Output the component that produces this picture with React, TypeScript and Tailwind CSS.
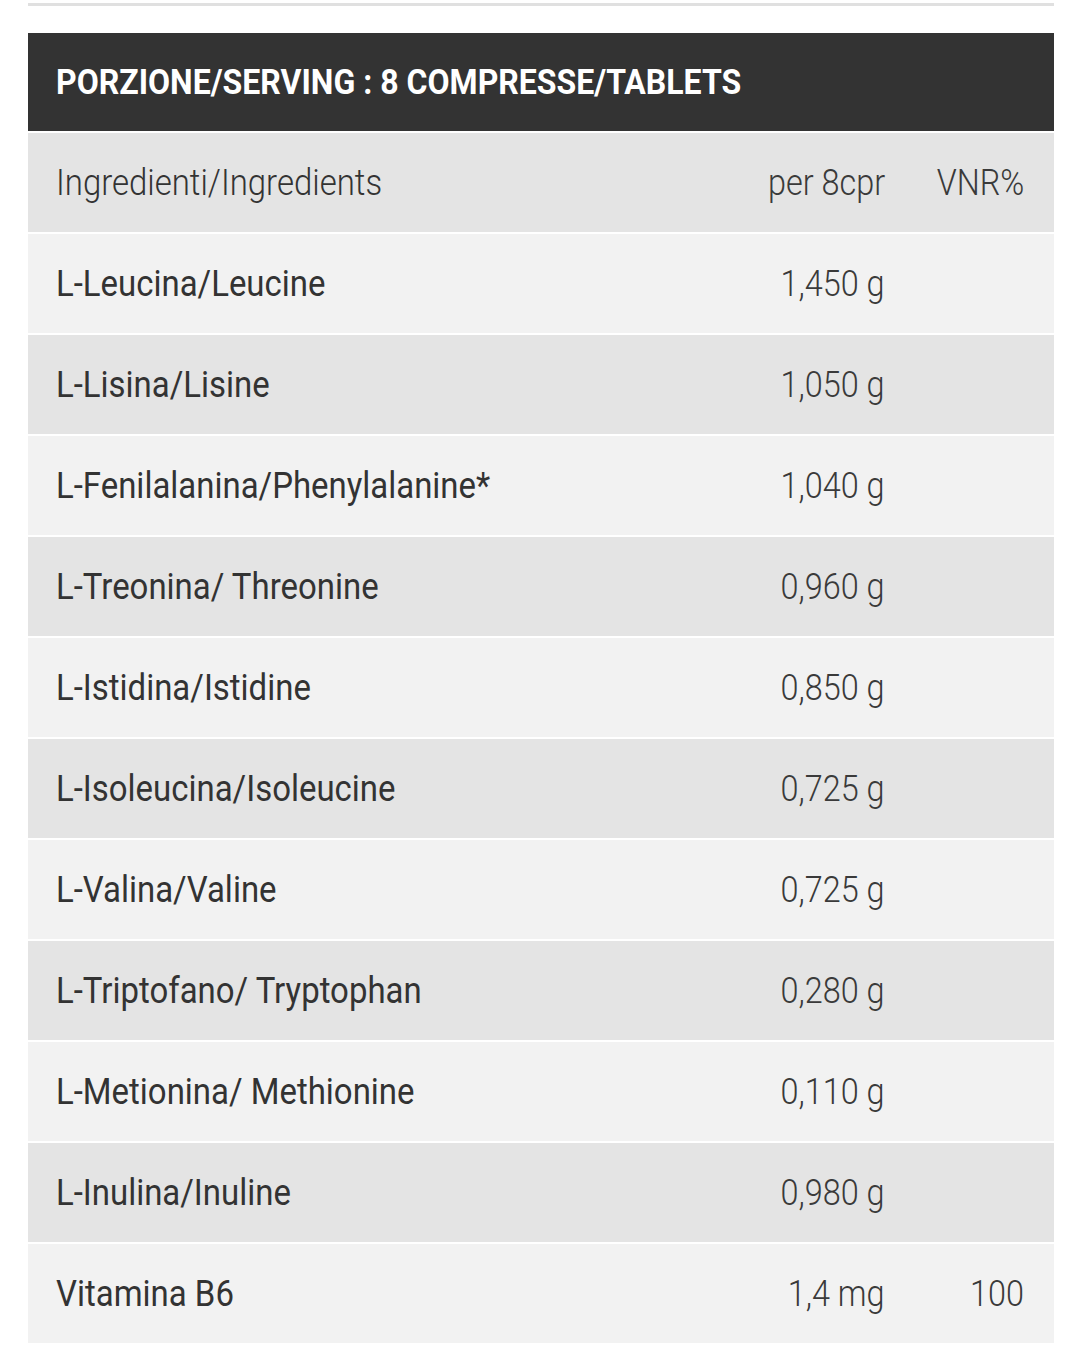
const rows: { name: string; amount: string; vnr?: string }[] = [
  { name: 'L-Leucina/Leucine', amount: '1,450 g' },
  { name: 'L-Lisina/Lisine', amount: '1,050 g' },
  { name: 'L-Fenilalanina/Phenylalanine*', amount: '1,040 g' },
  { name: 'L-Treonina/ Threonine', amount: '0,960 g' },
  { name: 'L-Istidina/Istidine', amount: '0,850 g' },
  { name: 'L-Isoleucina/Isoleucine', amount: '0,725 g' },
  { name: 'L-Valina/Valine', amount: '0,725 g' },
  { name: 'L-Triptofano/ Tryptophan', amount: '0,280 g' },
  { name: 'L-Metionina/ Methionine', amount: '0,110 g' },
  { name: 'L-Inulina/Inuline', amount: '0,980 g' },
  { name: 'Vitamina B6', amount: '1,4 mg', vnr: '100' },
];

// Roboto squeezed horizontally to stand in for Roboto Condensed
function Cond({ children, right }: { children: React.ReactNode; right?: boolean }) {
  return (
    <span
      className={
        'inline-block whitespace-nowrap ' +
        (right ? 'origin-right scale-x-[0.9]' : 'origin-left scale-x-[0.915]')
      }
    >
      {children}
    </span>
  );
}

function Row({
  name,
  amount,
  vnr,
  dark,
  light,
}: {
  name: string;
  amount: string;
  vnr?: string;
  dark: boolean;
  light?: boolean;
}) {
  return (
    <div
      className={
        'mt-[2px] flex h-[99px] items-center pl-[28px] pr-[30px] text-[36px] leading-none ' +
        (dark ? 'bg-[#e4e4e4]' : 'bg-[#f2f2f2]')
      }
    >
      <div className={'flex-1 text-[#333333] ' + (light ? 'font-light' : 'font-normal')}>
        <Cond>{name}</Cond>
      </div>
      <div className="w-[300px] text-right font-light text-[#3a3a3a]">
        <Cond right>{amount}</Cond>
      </div>
      <div className="w-[139px] text-right font-light text-[#3a3a3a]">
        {vnr && <Cond right>{vnr}</Cond>}
      </div>
    </div>
  );
}

export default function App() {
  return (
    <div className="min-h-[1366px] bg-white pl-[28px] pr-[26px] pt-[3px] font-['Roboto',sans-serif]">
      <div className="h-[3px] bg-[#e0e0e0]" />
      <div className="mt-[27px] flex h-[98px] items-center bg-[#333333] px-[28px] text-[35px] font-bold leading-none text-white">
        <Cond>PORZIONE/SERVING : 8 COMPRESSE/TABLETS</Cond>
      </div>
      <Row name="Ingredienti/Ingredients" amount="per 8cpr" vnr="VNR%" dark light />
      {rows.map((r, i) => (
        <Row key={r.name} name={r.name} amount={r.amount} vnr={r.vnr} dark={i % 2 === 1} />
      ))}
    </div>
  );
}
